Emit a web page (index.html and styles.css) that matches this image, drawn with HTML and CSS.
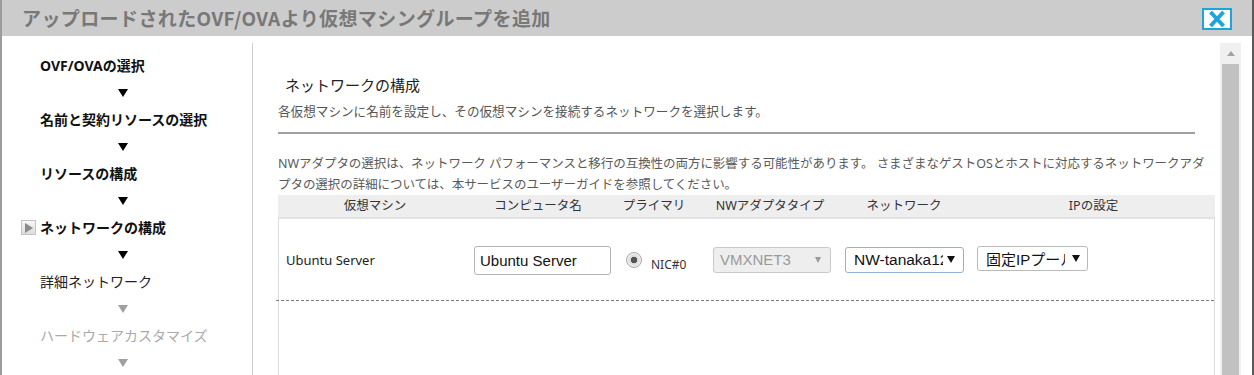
FILE: index.html
```html
<!DOCTYPE html>
<html lang="ja">
<head>
    <meta charset="UTF-8">
    <meta name="viewport" content="width=device-width, initial-scale=1.0">
    <title>仮想マシングループを追加</title>
    <link rel="stylesheet" href="styles.css">
</head>
<body>
<div class="dialog">
    <div class="titlebar">
        <h1 class="title">アップロードされたOVF/OVAより仮想マシングループを追加</h1>
        <button class="close" aria-label="閉じる">
            <svg width="26" height="18" viewBox="0 0 26 18"><path d="M6.5 2 L19.5 16 M19.5 2 L6.5 16" stroke="#1ca4dd" stroke-width="4" fill="none"/></svg>
        </button>
    </div>
    <div class="content">
        <ol class="steps">
            <li class="step">OVF/OVAの選択</li>
            <li class="arrow"></li>
            <li class="step">名前と契約リソースの選択</li>
            <li class="arrow"></li>
            <li class="step">リソースの構成</li>
            <li class="arrow"></li>
            <li class="step current"><span class="step-icon"></span>ネットワークの構成</li>
            <li class="arrow"></li>
            <li class="step next">詳細ネットワーク</li>
            <li class="arrow off"></li>
            <li class="step off">ハードウェアカスタマイズ</li>
            <li class="arrow off"></li>
        </ol>

        <div class="main">
            <h2 class="section-title">ネットワークの構成</h2>
            <p class="lead">各仮想マシンに名前を設定し、その仮想マシンを接続するネットワークを選択します。</p>
            <hr class="rule">
            <p class="note">NWアダプタの選択は、ネットワーク パフォーマンスと移行の互換性の両方に影響する可能性があります。 さまざまなゲストOSとホストに対応するネットワークアダプタの選択の詳細については、本サービスのユーザーガイドを参照してください。</p>

            <div class="table">
                <div class="thead">
                    <div>仮想マシン</div>
                    <div>コンピュータ名</div>
                    <div>プライマリ</div>
                    <div>NWアダプタタイプ</div>
                    <div>ネットワーク</div>
                    <div>IPの設定</div>
                </div>
                <div class="tbody">
                    <div class="trow">
                        <div class="cell cell-name">Ubuntu Server</div>
                        <div class="cell cell-host"><input class="text-input" type="text" value="Ubuntu Server"></div>
                        <div class="cell cell-primary"><span class="radio"></span><span class="nic">NIC#0</span></div>
                        <div class="cell cell-type">
                            <div class="select disabled"><span class="select-value">VMXNET3</span><span class="caret"></span></div>
                        </div>
                        <div class="cell cell-net">
                            <div class="select focused"><span class="select-value">NW-tanaka123</span><span class="caret"></span></div>
                        </div>
                        <div class="cell cell-ip">
                            <div class="select narrow"><span class="select-value">固定IPプール</span><span class="caret"></span></div>
                        </div>
                    </div>
                    <div class="row-sep"></div>
                </div>
            </div>
        </div>

        <div class="scrollbar">
            <div class="scroll-up"></div>
            <div class="scroll-thumb"></div>
        </div>
    </div>
</div>
</body>
</html>
```

FILE: styles.css
```css
* { box-sizing: border-box; }
body { margin: 0; background: #fff; font-family: "Noto Sans", "Noto Sans CJK JP", sans-serif; color: #222; overflow: hidden; }

.dialog { width: 1254px; height: 375px; border-left: 2px solid #9c9c9c; border-right: 2px solid #5a5a5a; display: flex; flex-direction: column; }

.titlebar { height: 36px; flex: none; background: #cccccc; display: flex; align-items: center; justify-content: space-between; padding: 0 20px 0 20px; }
.title { margin: 0; font-size: 19px; line-height: 24px; font-weight: bold; color: #787878; font-family: "Noto Sans CJK JP", sans-serif; letter-spacing: 0.4px; }
.close { width: 30px; height: 22px; padding: 0; margin-top: 2px; border: 2px solid #1ca4dd; background: #fff; display: flex; align-items: center; justify-content: center; cursor: pointer; }
.close svg { display: block; }

.content { flex: 1; display: flex; min-height: 0; }

/* wizard steps */
.steps { list-style: none; margin: 7px 0 0 0; padding: 9px 0 0 0; width: 251px; flex: none; border-right: 1px solid #cfcfcf; }
.step { height: 27px; line-height: 27px; padding-left: 38px; font-size: 14px; font-weight: bold; color: #111; display: flex; align-items: center; white-space: nowrap; }
.step.current { padding-left: 19px; }
.step.next { font-weight: normal; color: #222; }
.step.off { font-weight: normal; color: #aaa; }
.step-icon { width: 15px; height: 15px; margin-right: 4px; border: 1px solid #c4c4c4; background: linear-gradient(#f7f7f7, #dcdcdc); display: flex; align-items: center; justify-content: center; }
.step-icon::after { content: ""; border-top: 5px solid transparent; border-bottom: 5px solid transparent; border-left: 8px solid #8a8a8a; margin-left: 1px; }
.arrow { height: 27px; display: flex; align-items: center; padding-left: 116px; }
.arrow::after { content: ""; border-left: 5px solid transparent; border-right: 5px solid transparent; border-top: 8px solid #000; }
.arrow.off::after { border-top-color: #a0a0a0; }

/* main panel */
.main { width: 962px; flex: none; padding: 39px 0 0 25px; display: flex; flex-direction: column; min-height: 0; }
.section-title { margin: 0 0 7px 7px; font-size: 15px; line-height: 20px; font-weight: normal; color: #222; font-family: "Noto Sans CJK JP", sans-serif; }
.lead { margin: 0; font-size: 12.6px; line-height: 20px; color: #555; }
.rule { margin: 10px 20px 19px 0; border: 0; border-top: 2px solid #a0a0a0; }
.note { margin: 0; font-size: 12.5px; line-height: 21px; color: #5a5a5a; letter-spacing: -0.05px; }

.table { flex: 1; display: flex; flex-direction: column; min-height: 0; }
.thead { display: grid; grid-template-columns: 194px 132px 100px 132px 136px 243px; height: 24px; background: #eeeeee; border-bottom: 2px solid #e2e2e2; }
.thead div { text-align: center; font-size: 12.5px; line-height: 22px; color: #333; white-space: nowrap; }
.tbody { flex: 1; border-left: 1px solid #dcdcdc; border-right: 1px solid #dcdcdc; }
.trow { display: grid; grid-template-columns: 193px 132px 100px 132px 136px 242px; height: 81px; align-items: center; }
.cell { display: flex; align-items: center; white-space: nowrap; min-width: 0; }
.cell-name { padding-left: 7px; font-size: 13px; color: #222; }
.cell-host { padding-left: 2px; }
.cell-primary { padding-left: 22px; }
.cell-type, .cell-net { padding-left: 9px; }
.cell-ip { padding-left: 5px; }
.row-sep { height: 1px; margin-left: -3px; background: repeating-linear-gradient(to right, #7a7a7a 0 3px, transparent 3px 5px); }

.text-input { flex: none; width: 137px; height: 29px; margin-top: 1px; border: 1px solid #b4b4b4; border-radius: 3px; padding: 0 0 0 5px; font-family: "Liberation Sans", Arial, sans-serif; font-size: 15px; color: #111; background: #fff; }

.radio { width: 16px; height: 16px; border-radius: 50%; border: 1px solid #a9a9a9; background: radial-gradient(circle, #555 0 3px, #d9d9d9 3.5px, #f0f0f0 7px); flex: none; }
.nic { margin: 10px 0 0 9px; font-size: 12px; color: #333; }

.select { height: 26px; border: 1px solid #b9b9b9; border-radius: 3px; background: #fff; display: flex; align-items: center; font-family: "Liberation Sans", Arial, sans-serif; font-size: 15px; color: #111; }
.select-value { overflow: hidden; white-space: nowrap; padding-left: 7px; }
.caret { border-left: 4px solid transparent; border-right: 4px solid transparent; border-top: 7px solid #111; margin-left: 4px; }
.select.disabled { width: 118px; background: #eeeeee; border-color: #c9c9c9; color: #9a9a9a; }
.select.disabled .select-value { width: 96px; padding-left: 6px; }
.select.disabled .caret { border-top-color: #9a9a9a; border-left-width: 3.5px; border-right-width: 3.5px; border-top-width: 6px; margin-left: 5px; }
.select.focused { width: 119px; border-color: #8fb0d8; }
.select.focused .select-value { width: 97px; padding-left: 8px; font-size: 15.5px; }
.select.focused .caret { margin-left: 4px; }
.select.narrow { width: 111px; height: 25px; margin-top: -2px; }
.select.narrow .select-value { width: 87px; padding-left: 8px; font-family: "Liberation Sans", "Noto Sans CJK JP", sans-serif; }
.select.narrow .caret { margin-left: 7px; }

/* scrollbar */
.scrollbar { width: 21px; margin: 7px 0 0 5px; flex: none; background: #f0f0f0; display: flex; flex-direction: column; }
.scroll-up { height: 21px; display: flex; align-items: center; justify-content: center; }
.scroll-up::after { content: ""; border-left: 4.5px solid transparent; border-right: 4.5px solid transparent; border-bottom: 5px solid #a3a3a3; }
.scroll-thumb { flex: 1; margin: 0 2px; background: #c1c1c1; }
```
